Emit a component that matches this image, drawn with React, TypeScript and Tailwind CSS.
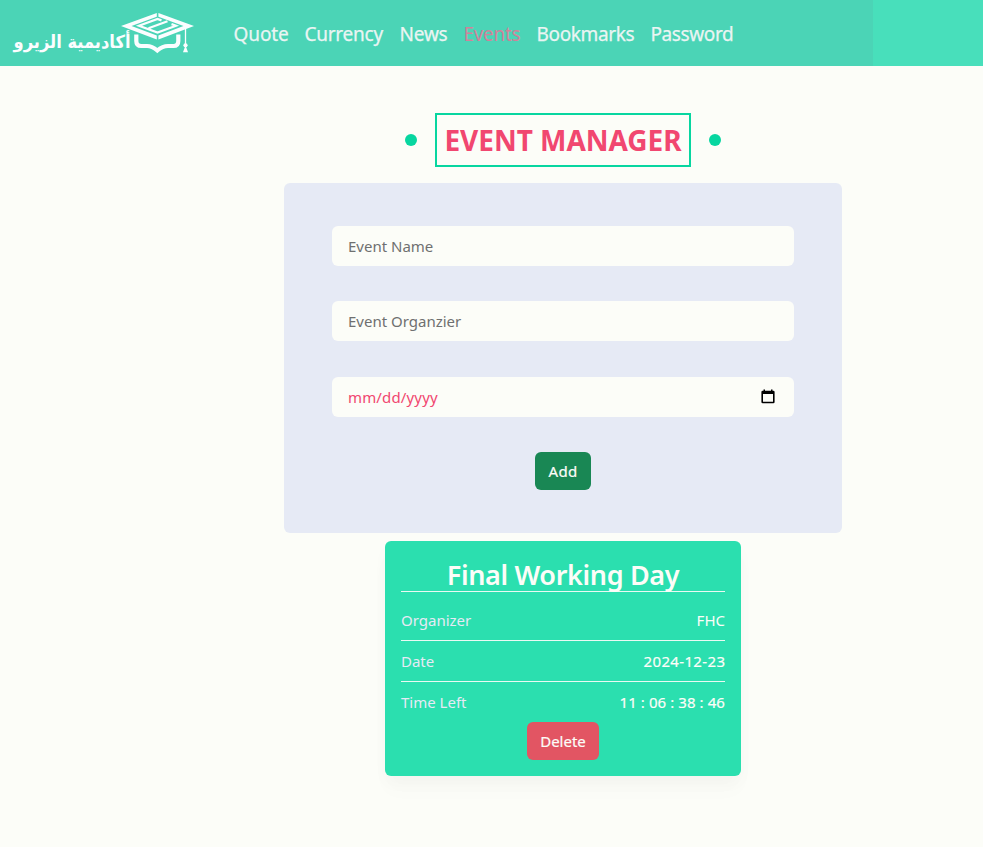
import type { ReactNode } from "react";

const NAV = [
  { label: "Quote", cls: "w-[55px] tracking-[-0.1px]" },
  { label: "Currency", cls: "w-[79px] tracking-[-0.25px]" },
  { label: "News", cls: "w-[48px] tracking-[-0.2px]" },
  { label: "Events", cls: "w-[57px] tracking-[-0.3px]", active: true },
  { label: "Bookmarks", cls: "w-[98px] tracking-[-0.35px]" },
  { label: "Password", cls: "w-[83px] tracking-[-0.4px]" },
];

function Logo() {
  return (
    <svg className="block h-[66px] w-[220px] shrink-0" viewBox="0 0 220 66" fill="none">
      <text
        x="130.5"
        y="48"
        direction="rtl"
        textLength="117"
        lengthAdjust="spacingAndGlyphs"
        fontFamily="'DejaVu Sans', sans-serif"
        fontWeight="700"
        fontSize="18"
        fill="#fcfdff"
      >
        أكاديمية الزيرو
      </text>
      <g stroke="#fcfdff">
        <path
          d="M156.8 13 L121 26 L156.8 39.6 V35.6 L131.5 26 L156.8 16.8 Z M158.4 13 L194 26 L158.4 39.6 V35.6 L183.5 26 L158.4 16.8 Z"
          fill="#fcfdff"
          strokeWidth="0"
        />
        <path
          d="M161.5 20.4 L157.5 19 L139 25.8 L157.5 32.6 L176 25.8 L171.5 24.1 M148.5 28.3 L167.5 21.3"
          strokeWidth="2.2"
          strokeLinejoin="miter"
        />
        <path
          d="M136.3 34.5 V41 Q136.3 46 141.3 46 H147 Q152 46 157.3 50.5 Q162.6 46 168 46 H173.5 Q178.3 46 178.3 41 V34.5"
          strokeWidth="4.2"
        />
        <path d="M185.5 29 V46" strokeWidth="1.3" />
        <circle cx="185.5" cy="45.3" r="2.1" fill="#fcfdff" strokeWidth="0" />
        <path d="M185.5 45.5 L183 52.2 H188 Z" fill="#fcfdff" strokeWidth="0" />
      </g>
    </svg>
  );
}

function Row({ label, cls, value, children }: { label: string; cls: string; value: string; children: ReactNode }) {
  return (
    <div className={`flex h-[41px] items-center justify-between text-[15px] ${cls}`}>
      <span className="text-[#e6eaf5]">{label}</span>
      <span className={`text-[#fcfdf8] ${value}`}>{children}</span>
    </div>
  );
}

export default function App() {
  return (
    <div className="h-[847px] w-full overflow-hidden bg-[#fcfdf8] font-['Noto_Sans',sans-serif]">
      <header className="flex h-[66px] bg-[#48dfbb]">
        <div className="flex w-[873px] items-center bg-[#4bd4b6]">
          <Logo />
          <nav className="ml-[13.5px] flex gap-4 text-[19px] leading-[30px]">
            {NAV.map((n) => (
              <a
                key={n.label}
                className={`${n.cls} whitespace-nowrap pt-[2px] ${n.active ? "text-[#d0839b]" : "text-[#eaf5f3] [-webkit-text-stroke:0.25px_#eaf5f3]"}`}
              >
                {n.label}
              </a>
            ))}
          </nav>
        </div>
      </header>

      <main className="ml-[284px] flex w-[558px] flex-col items-center pt-[47px]">
        <div className="flex items-center gap-[18px]">
          <i className="size-3 rounded-full bg-[#07d6a0]" />
          <h1 className="flex h-[54px] w-[256px] items-center justify-center whitespace-nowrap border-2 border-[#07d6a0] text-[28px] font-bold tracking-[-0.03px] text-[#f14770]">
            EVENT MANAGER
          </h1>
          <i className="size-3 rounded-full bg-[#07d6a0]" />
        </div>

        <form className="mt-4 flex h-[350px] w-full flex-col items-center rounded-md bg-[#e6eaf5] px-12 pt-[43px] text-[15px]">
          <div className="flex h-10 w-full items-center rounded-md bg-[#fcfdf8] px-4 text-[#6f7070]">
            Event Name
          </div>
          <div className="mt-[35px] flex h-10 w-full items-center rounded-md bg-[#fcfdf8] px-4 text-[#6f7070]">
            Event Organzier
          </div>
          <div className="mt-9 flex h-10 w-full items-center justify-between rounded-md bg-[#fcfdf8] pl-4 pr-[19px] text-[#f14770]">
            <span className="tracking-[0.15px]">mm/dd/yyyy</span>
            <svg className="-mt-px h-[15px] w-[14px]" viewBox="0 0 14 15">
              <path
                fillRule="evenodd"
                d="M2.5 0.5 H4 V1.8 H10 V0.5 H11.5 V1.8 H12.3 Q13.6 1.8 13.6 3 V13 Q13.6 14.2 12.3 14.2 H1.7 Q0.4 14.2 0.4 13 V3 Q0.4 1.8 1.7 1.8 H2.5 Z M2 5 V12.8 H12 V5 Z"
              />
            </svg>
          </div>
          <button type="button" className="mt-[35px] h-[38px] w-14 rounded-md bg-[#198754] tracking-[0.3px] text-[#fcfdf8] [-webkit-text-stroke:0.2px_#fcfdf8]">
            Add
          </button>
        </form>

        <section className="mt-2 flex h-[235px] w-[356px] flex-col items-center rounded-md bg-[#2bdfaf] px-4 pt-4 shadow-[0_8px_16px_rgba(0,0,0,0.025),0_16px_20px_rgba(0,0,0,0.015)]">
          <h2 className="flex h-[35px] w-full items-center justify-center whitespace-nowrap border-b border-[#e9faf3] pt-[2px] text-[27px] font-semibold tracking-[-0.35px] text-[#fcfdf8]">
            Final Working Day
          </h2>
          <div className="mt-2 w-full">
            <Row label="Organizer" cls="border-b border-[#e9faf3]" value="">FHC</Row>
            <Row label="Date" cls="border-b border-[#e9faf3]" value="tracking-[0.35px] -mr-[0.35px] [-webkit-text-stroke:0.2px_#fcfdf8]">2024-12-23</Row>
            <Row label="Time Left" cls="" value="tracking-[0.08px] [-webkit-text-stroke:0.2px_#fcfdf8]">11 : 06 : 38 : 46</Row>
          </div>
          <button type="button" className="-mt-px h-[38px] w-[72px] rounded-md bg-[#e25563] text-[15px] text-[#fcfdf8] [-webkit-text-stroke:0.2px_#fcfdf8]">
            Delete
          </button>
        </section>
      </main>
    </div>
  );
}
